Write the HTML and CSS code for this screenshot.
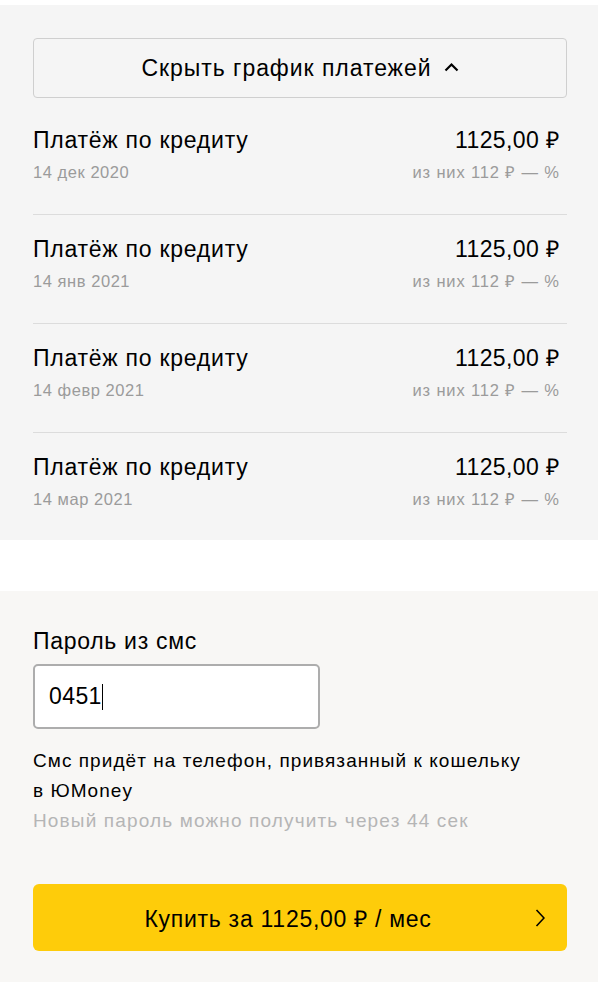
FILE: index.html
```html
<!DOCTYPE html>
<html lang="ru">
<head>
<meta charset="utf-8">
<link rel="stylesheet" href="styles.css">
</head>
<body>
<section class="schedule">
  <button class="toggle">
    <span>Скрыть график платежей</span>
    <svg class="chev-up" width="15" height="10" viewBox="0 0 15 10"><path d="M1.5 8.5 L7.5 2.5 L13.5 8.5" fill="none" stroke="#000" stroke-width="2.2"/></svg>
  </button>
  <div class="row">
    <div class="col"><div class="title">Платёж по кредиту</div><div class="sub">14 дек 2020</div></div>
    <div class="col right"><div class="title">1125,00 ₽</div><div class="sub">из них 112 ₽ — %</div></div>
  </div>
  <div class="row">
    <div class="col"><div class="title">Платёж по кредиту</div><div class="sub">14 янв 2021</div></div>
    <div class="col right"><div class="title">1125,00 ₽</div><div class="sub">из них 112 ₽ — %</div></div>
  </div>
  <div class="row">
    <div class="col"><div class="title">Платёж по кредиту</div><div class="sub">14 февр 2021</div></div>
    <div class="col right"><div class="title">1125,00 ₽</div><div class="sub">из них 112 ₽ — %</div></div>
  </div>
  <div class="row">
    <div class="col"><div class="title">Платёж по кредиту</div><div class="sub">14 мар 2021</div></div>
    <div class="col right"><div class="title">1125,00 ₽</div><div class="sub">из них 112 ₽ — %</div></div>
  </div>
</section>
<section class="confirm">
  <div class="label">Пароль из смс</div>
  <div class="field"><span class="value">0451</span><span class="caret"></span></div>
  <p class="hint">Смс придёт на телефон, привязанный к кошельку в&nbsp;ЮMoney</p>
  <p class="timer">Новый пароль можно получить через 44 сек</p>
  <button class="buy">
    <span class="buy-text">Купить за 1125,00 ₽ / мес</span>
    <svg class="chev-right" width="10" height="18" viewBox="0 0 10 18"><path d="M1.5 1 L9 9 L1.5 17" fill="none" stroke="#000" stroke-width="1.6"/></svg>
  </button>
</section>
</body>
</html>
```
FILE: styles.css
```css
* { box-sizing: border-box; }
html, body { margin: 0; padding: 0; background: #fff; }
body {
  font-family: "Liberation Sans", Arial, sans-serif;
  color: #000;
  padding-top: 5px;
}
.schedule {
  background: #f5f5f5;
  padding: 33px 31px 0 33px;
  height: 535px;
}
.toggle {
  width: 534px;
  height: 60px;
  border: 1px solid #cfcfcf;
  border-radius: 4px;
  background: #f5f5f5;
  font: 23px "Liberation Sans", Arial, sans-serif;
  letter-spacing: 0.95px;
  color: #000;
  display: flex;
  align-items: center;
  justify-content: center;
  gap: 12px;
  padding: 0;
  margin: 0 0 8px 0;
}
.chev-up { display: block; margin-top: -2px; }
.row {
  display: flex;
  justify-content: space-between;
  padding: 20px 8px 30px 0;
  border-bottom: 1px solid #dcdcdc;
}
.row:last-child { border-bottom: none; }
.col.right { text-align: right; }
.title { font-size: 23px; line-height: 28px; letter-spacing: 0.75px; }
.col.right .title { letter-spacing: 0.4px; margin-right: -0.4px; }
.sub { font-size: 16.5px; line-height: 24px; color: #9b9b9b; margin-top: 6px; letter-spacing: 0.55px; }
.col.right .sub { letter-spacing: 0.85px; margin-right: -0.85px; }
.confirm {
  margin-top: 51px;
  background: #f8f7f5;
  padding: 36px 31px 31px 33px;
  height: 391px;
}
.label { font-size: 23px; line-height: 28px; letter-spacing: 0.7px; }
.field {
  margin-top: 9px;
  width: 287px;
  height: 65px;
  border: 2px solid #adadad;
  border-radius: 5px;
  background: #fff;
  display: flex;
  align-items: center;
  padding-left: 14px;
  font-size: 23px;
  letter-spacing: 0.4px;
}
.caret { display: inline-block; width: 1px; height: 26px; background: #000; margin-left: 0; }
.hint { margin: 17px 0 0; font-size: 19px; line-height: 30px; width: 534px; letter-spacing: 1.05px; }
.timer { margin: 0; font-size: 19px; line-height: 30px; color: #b5b5b5; letter-spacing: 1.15px; }
.buy {
  margin-top: 48px;
  width: 534px;
  height: 67px;
  border: none;
  border-radius: 6px;
  background: #fecc0a;
  font: 23px "Liberation Sans", Arial, sans-serif;
  letter-spacing: 0.73px;
  color: #000;
  display: flex;
  align-items: center;
  padding: 0 22px 0 8px;
}
.buy-text { flex: 1; text-align: center; }
.chev-right { display: block; }
```
